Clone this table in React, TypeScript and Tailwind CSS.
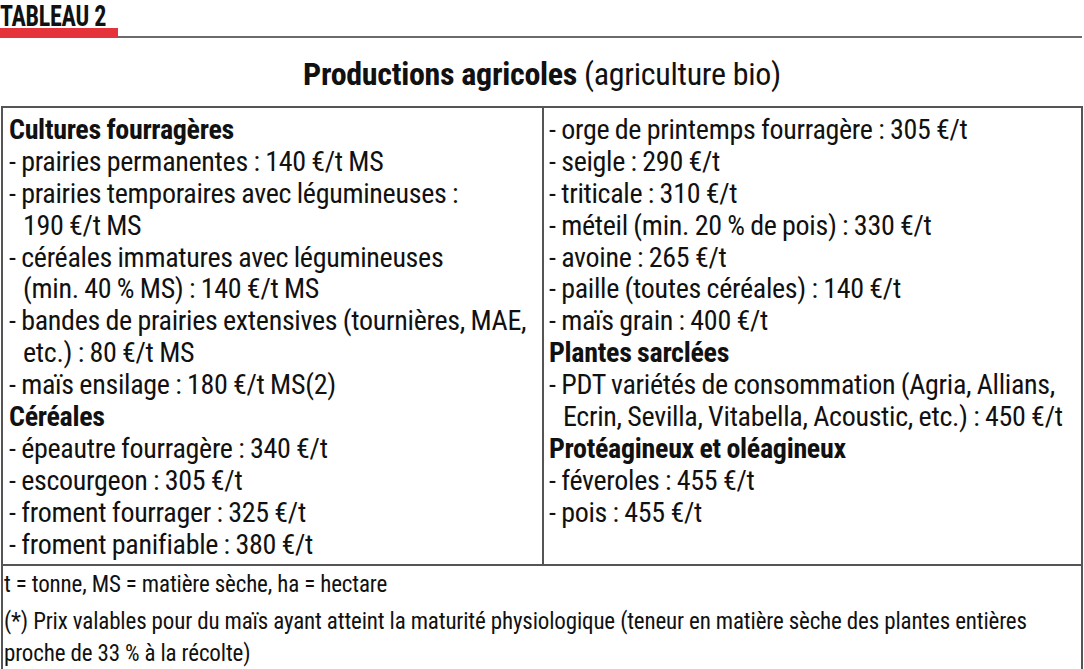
const left: { t: string; b?: boolean; indent?: boolean }[] = [
  { t: 'Cultures fourragères', b: true },
  { t: '- prairies permanentes : 140 €/t MS' },
  { t: '- prairies temporaires avec légumineuses :' },
  { t: '190 €/t MS', indent: true },
  { t: '- céréales immatures avec légumineuses' },
  { t: '(min. 40 % MS) : 140 €/t MS', indent: true },
  { t: '- bandes de prairies extensives (tournières, MAE,' },
  { t: 'etc.) : 80 €/t MS', indent: true },
  { t: '- maïs ensilage : 180 €/t MS(2)' },
  { t: 'Céréales', b: true },
  { t: '- épeautre fourragère : 340 €/t' },
  { t: '- escourgeon : 305 €/t' },
  { t: '- froment fourrager : 325 €/t' },
  { t: '- froment panifiable : 380 €/t' },
];

const right: { t: string; b?: boolean; indent?: boolean }[] = [
  { t: '- orge de printemps fourragère : 305 €/t' },
  { t: '- seigle : 290 €/t' },
  { t: '- triticale : 310 €/t' },
  { t: '- méteil (min. 20 % de pois) : 330 €/t' },
  { t: '- avoine : 265 €/t' },
  { t: '- paille (toutes céréales) : 140 €/t' },
  { t: '- maïs grain : 400 €/t' },
  { t: 'Plantes sarclées', b: true },
  { t: '- PDT variétés de consommation (Agria, Allians,' },
  { t: 'Ecrin, Sevilla, Vitabella, Acoustic, etc.) : 450 €/t', indent: true },
  { t: 'Protéagineux et oléagineux', b: true },
  { t: '- féveroles : 455 €/t' },
  { t: '- pois : 455 €/t' },
];

function Lines({ items }: { items: { t: string; b?: boolean; indent?: boolean }[] }) {
  return (
    <div className="flex flex-col">
      {items.map((it, i) => (
        <div
          key={i}
          className={
            'whitespace-nowrap h-[31.9px] leading-[31.9px] ' +
            (it.b ? 'font-bold ' : 'font-normal ') +
            (it.indent ? 'pl-[14px]' : 'pl-0')
          }
        >
          {it.t}
        </div>
      ))}
    </div>
  );
}

export default function App() {
  return (
    <div className="w-[1084px] h-[669px] overflow-hidden bg-white text-[#111] font-['Roboto_Condensed',sans-serif]">
      <div className="h-[28px] pt-[2px]">
        <div className="origin-left scale-x-[0.83] text-[29px] leading-[28px] font-bold tracking-[-0.3px] whitespace-nowrap">
          TABLEAU 2
        </div>
      </div>
      <div className="flex h-[10px] w-[1082px]">
        <div className="w-[118px] h-[10px] bg-[#e5333b]" />
        <div className="flex-1 border-b-2 border-[#6b6b6b]" />
      </div>
      <div className="h-[68px] flex items-center justify-center text-[32px] leading-[36px] pt-[3px] tracking-[-0.3px]">
        <span className="font-bold">Productions agricoles</span>
        <span className="font-normal">&nbsp;(agriculture bio)</span>
      </div>
      <div className="ml-[1px] w-[1082px] border-t-2 border-l-2 border-r-2 border-[#555]">
        <div className="grid grid-cols-[539px_1fr] text-[28px] tracking-[-0.3px] [word-spacing:-0.6px] border-b-2 border-[#555]">
          <div className="pl-[6px] pt-[6px] pb-[4px]">
            <Lines items={left} />
          </div>
          <div className="border-l-2 border-[#555] pl-[5px] pt-[6px]">
            <Lines items={right} />
          </div>
        </div>
        <div className="pl-[1px] pt-[3px] text-[23px] leading-[32px] tracking-[-0.15px] h-[110px]">
          <div className="whitespace-nowrap">t = tonne, MS = matière sèche, ha = hectare</div>
          <div className="mt-[5px] whitespace-nowrap">
            (*) Prix valables pour du maïs ayant atteint la maturité physiologique (teneur en matière sèche des plantes entières
          </div>
          <div className="whitespace-nowrap">proche de 33 % à la récolte)</div>
        </div>
      </div>
    </div>
  );
}
